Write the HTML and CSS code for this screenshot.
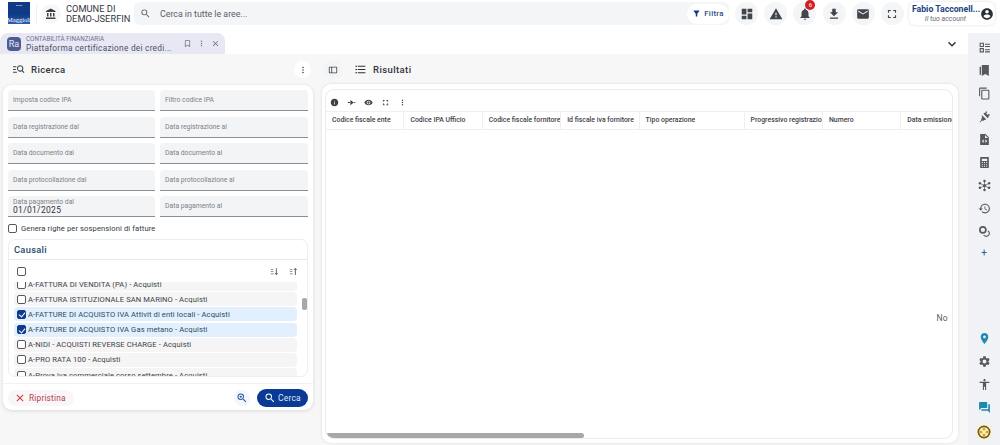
FILE: index.html
```html
<!DOCTYPE html>
<html lang="it">

<head>
    <meta charset="UTF-8">
    <title>Piattaforma certificazione dei crediti</title>
    <link rel="stylesheet" href="styles.css">
</head>

<body>
    <svg class="sprite" aria-hidden="true">
        <symbol id="i-bank" viewBox="0 0 24 24"><path d="M4 10v7h3v-7H4zm6 0v7h3v-7h-3zM2 22h19v-3H2v3zm14-12v7h3v-7h-3zm-4.500-9L2 6v2h19V6l-9.500-5z"/></symbol>
        <symbol id="i-search" viewBox="0 0 24 24"><path d="M15.500 14h-.79l-.28-.27A6.471 6.471 0 0 0 16 9.500 6.500 6.500 0 1 0 9.500 16c1.610 0 3.090-.59 4.230-1.570l.27.28v.79l5 4.990L20.490 19l-4.990-5zm-6 0C7.010 14 5 11.990 5 9.500S7.010 5 9.500 5 14 7.010 14 9.500 11.990 14 9.500 14z"/></symbol>
        <symbol id="i-filter" viewBox="0 0 24 24"><path d="M4.250 5.610C6.270 8.200 10 13 10 13v6c0 .55.45 1 1 1h2c.55 0 1-.45 1-1v-6s3.720-4.800 5.740-7.390A.998.998 0 0 0 18.950 4H5.040c-.83 0-1.300.95-.79 1.610z"/></symbol>
        <symbol id="i-dashboard" viewBox="0 0 24 24"><path d="M3 13h8V3H3v10zm0 8h8v-6H3v6zm10 0h8V11h-8v10zm0-18v6h8V3h-8z"/></symbol>
        <symbol id="i-warning" viewBox="0 0 24 24"><path d="M1 21h22L12 2 1 21zm12-3h-2v-2h2v2zm0-4h-2v-4h2v4z"/></symbol>
        <symbol id="i-bell" viewBox="0 0 24 24"><path d="M12 22c1.100 0 2-.9 2-2h-4c0 1.100.89 2 2 2zm6-6v-5c0-3.070-1.640-5.640-4.500-6.320V4c0-.83-.67-1.500-1.500-1.500s-1.500.67-1.500 1.500v.68C7.630 5.360 6 7.920 6 11v5l-2 2v1h16v-1l-2-2z"/></symbol>
        <symbol id="i-download" viewBox="0 0 24 24"><path d="M19 9h-4V3H9v6H5l7 7 7-7zM5 18v2h14v-2H5z"/></symbol>
        <symbol id="i-mail" viewBox="0 0 24 24"><path d="M20 4H4c-1.100 0-1.990.9-1.990 2L2 18c0 1.100.9 2 2 2h16c1.100 0 2-.9 2-2V6c0-1.100-.9-2-2-2zm0 4l-8 5-8-5V6l8 5 8-5v2z"/></symbol>
        <symbol id="i-full" viewBox="0 0 24 24"><path d="M7 14H5v5h5v-2H7v-3zm-2-4h2V7h3V5H5v5zm12 7h-3v2h5v-5h-2v3zM14 5v2h3v3h2V5h-5z"/></symbol>
        <symbol id="i-account" viewBox="0 0 24 24"><path d="M12 2C6.480 2 2 6.480 2 12s4.480 10 10 10 10-4.480 10-10S17.520 2 12 2zm0 3c1.660 0 3 1.340 3 3s-1.340 3-3 3-3-1.340-3-3 1.340-3 3-3zm0 14.200c-2.500 0-4.710-1.280-6-3.220.03-1.990 4-3.080 6-3.080 1.990 0 5.970 1.090 6 3.080-1.290 1.940-3.500 3.220-6 3.220z"/></symbol>
        <symbol id="i-chevron" viewBox="0 0 24 24"><path d="M16.590 8.590L12 13.170 7.410 8.590 6 10l6 6 6-6z"/></symbol>
        <symbol id="i-close" viewBox="0 0 24 24"><path d="M19 6.410L17.590 5 12 10.590 6.410 5 5 6.410 10.590 12 5 17.590 6.410 19 12 13.410 17.590 19 19 17.590 13.410 12z"/></symbol>
        <symbol id="i-more" viewBox="0 0 24 24"><path d="M12 8c1.100 0 2-.9 2-2s-.9-2-2-2-2 .9-2 2 .9 2 2 2zm0 2c-1.100 0-2 .9-2 2s.9 2 2 2 2-.9 2-2-.9-2-2-2zm0 6c-1.100 0-2 .9-2 2s.9 2 2 2 2-.9 2-2-.9-2-2-2z"/></symbol>
        <symbol id="i-bookmark-o" viewBox="0 0 24 24"><path d="M17 3H7c-1.100 0-1.990.9-1.990 2L5 21l7-3 7 3V5c0-1.100-.9-2-2-2zm0 15l-5-2.180L7 18V5h10v13z"/></symbol>
        <symbol id="i-list" viewBox="0 0 24 24"><path d="M4 10.500c-.83 0-1.500.67-1.500 1.500s.67 1.500 1.500 1.500 1.500-.67 1.500-1.500-.67-1.500-1.500-1.500zm0-6c-.83 0-1.500.67-1.500 1.500S3.170 7.500 4 7.500 5.500 6.830 5.500 6 4.830 4.500 4 4.500zm0 12c-.83 0-1.500.68-1.500 1.500s.68 1.500 1.500 1.500 1.500-.68 1.500-1.500-.67-1.500-1.500-1.500zM7 19h14v-2H7v2zm0-6h14v-2H7v2zm0-8v2h14V5H7z"/></symbol>
        <symbol id="i-place" viewBox="0 0 24 24"><path d="M12 2C8.130 2 5 5.130 5 9c0 5.250 7 13 7 13s7-7.750 7-13c0-3.870-3.130-7-7-7zm0 9.500c-1.380 0-2.500-1.120-2.500-2.500s1.120-2.500 2.500-2.500 2.500 1.120 2.500 2.500-1.120 2.500-2.500 2.500z"/></symbol>
        <symbol id="i-settings" viewBox="0 0 24 24"><path d="M19.140 12.940c.04-.3.06-.61.06-.94 0-.32-.02-.64-.07-.94l2.030-1.580c.18-.14.23-.41.12-.61l-1.920-3.320c-.12-.22-.37-.29-.59-.22l-2.390.96c-.5-.38-1.030-.7-1.620-.94l-.36-2.540c-.04-.24-.24-.41-.48-.41h-3.840c-.24 0-.43.17-.47.41l-.36 2.540c-.59.24-1.130.57-1.620.94l-2.390-.96c-.22-.08-.47 0-.59.22L2.740 8.870c-.12.21-.08.47.12.61l2.030 1.580c-.05.3-.09.63-.09.94s.02.64.07.94l-2.030 1.580c-.18.14-.23.41-.12.61l1.920 3.320c.12.22.37.29.59.22l2.390-.96c.5.38 1.030.7 1.620.94l.36 2.540c.05.24.24.41.48.41h3.840c.24 0 .44-.17.47-.41l.36-2.540c.59-.24 1.130-.56 1.620-.94l2.390.96c.22.08.47 0 .59-.22l1.920-3.320c.12-.22.07-.47-.12-.61l-2.010-1.580zM12 15.600c-1.980 0-3.600-1.620-3.600-3.600s1.620-3.600 3.600-3.600 3.600 1.620 3.600 3.600-1.620 3.600-3.600 3.600z"/></symbol>
        <symbol id="i-access" viewBox="0 0 24 24"><path d="M12 2c1.100 0 2 .9 2 2s-.9 2-2 2-2-.9-2-2 .9-2 2-2zm9 7h-6v13h-2v-6h-2v6H9V9H3V7h18v2z"/></symbol>
        <symbol id="i-forum" viewBox="0 0 24 24"><path d="M21 6h-2v9H6v2c0 .55.45 1 1 1h11l4 4V7c0-.55-.45-1-1-1zm-4 6V3c0-.55-.45-1-1-1H3c-.55 0-1 .45-1 1v14l4-4h10c.55 0 1-.45 1-1z"/></symbol>
        <symbol id="i-history" viewBox="0 0 24 24"><path d="M13 3c-4.970 0-9 4.030-9 9H1l3.890 3.890.07.14L9 12H6c0-3.870 3.130-7 7-7s7 3.130 7 7-3.130 7-7 7c-1.930 0-3.680-.79-4.940-2.060l-1.420 1.420C8.270 19.990 10.510 21 13 21c4.970 0 9-4.030 9-9s-4.030-9-9-9zm-1 5v5l4.280 2.540.72-1.210-3.500-2.080V8H12z"/></symbol>
        <symbol id="i-copy" viewBox="0 0 24 24"><path d="M16 1H4c-1.100 0-2 .9-2 2v14h2V3h12V1zm3 4H8c-1.100 0-2 .9-2 2v14c0 1.100.9 2 2 2h11c1.100 0 2-.9 2-2V7c0-1.100-.9-2-2-2zm0 16H8V7h11v14z"/></symbol>
        <symbol id="i-eye" viewBox="0 0 24 24"><path d="M12 4.500C7 4.500 2.730 7.610 1 12c1.730 4.390 6 7.500 11 7.500s9.270-3.110 11-7.500c-1.730-4.390-6-7.500-11-7.500zM12 17c-2.760 0-5-2.240-5-5s2.240-5 5-5 5 2.240 5 5-2.240 5-5 5zm0-8c-1.660 0-3 1.340-3 3s1.340 3 3 3 3-1.340 3-3-1.340-3-3-3z"/></symbol>
        <symbol id="i-info" viewBox="0 0 24 24"><path d="M12 2C6.480 2 2 6.480 2 12s4.480 10 10 10 10-4.480 10-10S17.520 2 12 2zm1 15h-2v-6h2v6zm0-8h-2V7h2v2z"/></symbol>
        <symbol id="i-checklist" viewBox="0 0 24 24"><path fill-rule="evenodd" d="M3 3h8v8H3V3zm2 2v4h4V5H5zM3 13h8v8H3v-8zm2 2v4h4v-4H5z"/><path d="M13 5h9v2h-9zM13 9h9v2h-9zM13 15h9v2h-9zM13 19h9v2h-9z"/></symbol>
        <symbol id="i-books" viewBox="0 0 24 24"><path d="M7 2h13v20l-6.500-3.500L7 22V2z"/><path d="M3 5h2.500v15H3z"/></symbol>
        <symbol id="i-plug" viewBox="0 0 24 24"><path d="M15 2l2 2-2 2 3 3 2-2 2 2-3 3 1 1-2 2-8-8 2-2 1 1zM7 9l8 8-2 2-1-1-2 2-3 0-3 3-1-1 3-3 0-3 2-2-1-1z"/></symbol>
        <symbol id="i-filecode" viewBox="0 0 24 24"><path fill-rule="evenodd" d="M6 2h8l6 6v14H4V2h2zm7 1.500V9h5.500L13 3.500zM10 12l-3 3 3 3 1.200-1.200L9.400 15l1.800-1.800L10 12zm4 0l-1.200 1.200 1.800 1.800-1.800 1.800L14 18l3-3-3-3z"/></symbol>
        <symbol id="i-calc" viewBox="0 0 24 24"><path fill-rule="evenodd" d="M5 2h14a1 1 0 0 1 1 1v18a1 1 0 0 1-1 1H5a1 1 0 0 1-1-1V3a1 1 0 0 1 1-1zm2 3v4h10V5H7zm0 6v2h2v-2H7zm4 0v2h2v-2h-2zm4 0v2h2v-2h-2zM7 15v2h2v-2H7zm4 0v2h2v-2h-2zm4 0v2h2v-2h-2zM7 18.500v1.500h2v-1.500H7zm4 0v1.500h2v-1.500h-2zm4 0v1.500h2v-1.500h-2z"/></symbol>
        <symbol id="i-hub" viewBox="0 0 24 24"><circle cx="12" cy="12" r="3"/><circle cx="12" cy="3.500" r="2.300"/><circle cx="12" cy="20.500" r="2.300"/><circle cx="3.500" cy="8" r="2.300"/><circle cx="20.500" cy="8" r="2.300"/><circle cx="3.500" cy="16" r="2.300"/><circle cx="20.500" cy="16" r="2.300"/><path d="M11.400 4h1.200v16h-1.200zM3.500 7.400l17 8.600-.6 1-17-8.600zM20.500 7.400l.6 1-17 8.600-.6-1z"/></symbol>
        <symbol id="i-coins" viewBox="0 0 24 24"><path fill-rule="evenodd" d="M9 2a7 7 0 1 1 0 14A7 7 0 0 1 9 2zm0 3a4 4 0 1 0 0 8 4 4 0 0 0 0-8z"/><path d="M18 9.500c2.500 1 4 3.300 4 5.800 0 3.700-3 6.700-6.700 6.700-2.500 0-4.700-1.400-5.800-3.500l2-.6c.8 1.300 2.200 2.100 3.800 2.100 2.600 0 4.700-2.100 4.700-4.700 0-1.500-.8-2.900-2-3.800z"/></symbol>
        <symbol id="i-sort-down" viewBox="0 0 24 24"><path d="M2 5h7v2.500H2zM2 11h7v2.500H2zM2 17h8v2.500H2zM15.500 3h3v13h3.500l-5 6-5-6h3.500z"/></symbol>
        <symbol id="i-sort-up" viewBox="0 0 24 24"><path d="M2 5h7v2.500H2zM2 11h7v2.500H2zM2 17h8v2.500H2zM15.500 21h3V8h3.500l-5-6-5 6h3.500z"/></symbol>
        <symbol id="i-searchlist" viewBox="0 0 24 24"><path d="M2 6h6v2H2zM2 11h5v2H2zM2 16h7v2H2z"/><path fill-rule="evenodd" d="M15 4a6 6 0 0 1 4.700 9.700l3.300 3.300-1.500 1.500-3.300-3.300A6 6 0 1 1 15 4zm0 2a4 4 0 1 0 0 8 4 4 0 0 0 0-8z"/></symbol>
        <symbol id="i-panel" viewBox="0 0 24 24"><path fill-rule="evenodd" d="M4 4h16a2 2 0 0 1 2 2v12a2 2 0 0 1-2 2H4a2 2 0 0 1-2-2V6a2 2 0 0 1 2-2zm0 2v12h4V6H4zm6 0v12h10V6H10z"/></symbol>
        <symbol id="i-zoomin" viewBox="0 0 24 24"><path d="M15.500 14h-.79l-.28-.27A6.471 6.471 0 0 0 16 9.500 6.500 6.500 0 1 0 9.500 16c1.610 0 3.090-.59 4.230-1.570l.27.28v.79l5 4.990L20.490 19l-4.990-5zm-6 0C7.010 14 5 11.990 5 9.500S7.010 5 9.500 5 14 7.010 14 9.500 11.990 14 9.500 14z"/><circle cx="9.500" cy="9.500" r="2.200"/></symbol>
        <symbol id="i-fold" viewBox="0 0 24 24"><path d="M2 10.500h6v3H2zM9 5l9 7-9 7zM19 10.500h3v3h-3z"/></symbol>
    </svg>

    <header class="topbar">
        <div class="logo"><span class="logo-dots">•••••</span><span class="logo-name">Maggioli</span></div>
        <span class="divider"></span>
        <span class="round-btn bank"><svg class="ico"><use href="#i-bank"/></svg></span>
        <div class="org">COMUNE DI<br>DEMO-JSERFIN</div>
        <div class="searchbar">
            <svg class="ico search-ico"><use href="#i-search"/></svg>
            <span class="search-text">Cerca in tutte le aree...</span>
            <span class="filter-btn"><svg class="ico"><use href="#i-filter"/></svg>Filtra</span>
        </div>
        <div class="actions">
            <span class="round-btn"><svg class="ico"><use href="#i-dashboard"/></svg></span>
            <span class="round-btn"><svg class="ico"><use href="#i-warning"/></svg></span>
            <span class="round-btn bell"><svg class="ico"><use href="#i-bell"/></svg><span class="badge">6</span></span>
            <span class="round-btn"><svg class="ico"><use href="#i-download"/></svg></span>
            <span class="round-btn"><svg class="ico"><use href="#i-mail"/></svg></span>
            <span class="round-btn"><svg class="ico"><use href="#i-full"/></svg></span>
        </div>
        <div class="account">
            <div class="account-text">
                <div class="account-name">Fabio Tacconell...</div>
                <div class="account-sub">Il tuo account</div>
            </div>
            <svg class="ico"><use href="#i-account"/></svg>
        </div>
    </header>

    <div class="tabstrip">
        <div class="tab">
            <span class="tab-badge">Ra</span>
            <div class="tab-text">
                <div class="tab-sup">CONTABILITÀ FINANZIARIA</div>
                <div class="tab-title">Piattaforma certificazione dei credi...</div>
            </div>
            <svg class="ico"><use href="#i-bookmark-o"/></svg>
            <svg class="ico"><use href="#i-more"/></svg>
            <svg class="ico"><use href="#i-close"/></svg>
        </div>
        <svg class="ico tab-chevron"><use href="#i-chevron"/></svg>
    </div>

    <div class="workspace">
        <main class="content">
            <section class="left">
                <div class="pane-head">
                    <svg class="ico"><use href="#i-searchlist"/></svg>
                    <h2>Ricerca</h2>
                    <span class="round-btn small"><svg class="ico"><use href="#i-more"/></svg></span>
                </div>
                <div class="search-card">
                    <div class="fields">
                        <div class="field">Imposta codice IPA</div>
                        <div class="field">Filtro codice IPA</div>
                        <div class="field">Data registrazione dal</div>
                        <div class="field">Data registrazione al</div>
                        <div class="field">Data documento dal</div>
                        <div class="field">Data documento al</div>
                        <div class="field">Data protocollazione dal</div>
                        <div class="field">Data protocollazione al</div>
                        <div class="field filled"><span>Data pagamento dal</span><b>01/01/2025</b></div>
                        <div class="field">Data pagamento al</div>
                    </div>
                    <label class="gen-row"><span class="check"></span>Genera righe per sospensioni di fatture</label>
                    <div class="causali">
                        <div class="causali-head">Causali</div>
                        <div class="causali-tools">
                            <span class="check"></span>
                            <svg class="ico"><use href="#i-sort-down"/></svg>
                            <svg class="ico"><use href="#i-sort-up"/></svg>
                        </div>
                        <div class="causali-list">
                            <div class="rows">
                                <div class="row"><span class="check"></span>A-FATTURA DI VENDITA (PA) - Acquisti</div>
                                <div class="row"><span class="check"></span>A-FATTURA ISTITUZIONALE SAN MARINO - Acquisti</div>
                                <div class="row on"><span class="check on"></span>A-FATTURE DI ACQUISTO IVA Attivit di enti locali - Acquisti</div>
                                <div class="row on"><span class="check on"></span>A-FATTURE DI ACQUISTO IVA Gas metano - Acquisti</div>
                                <div class="row"><span class="check"></span>A-NIDI - ACQUISTI REVERSE CHARGE - Acquisti</div>
                                <div class="row"><span class="check"></span>A-PRO RATA 100 - Acquisti</div>
                                <div class="row"><span class="check"></span>A-Prova iva commerciale corso settembre - Acquisti</div>
                            </div>
                            <span class="list-thumb"></span>
                        </div>
                    </div>
                    <div class="search-foot">
                        <span class="reset"><svg class="ico"><use href="#i-close"/></svg>Ripristina</span>
                        <span class="round-btn zoom"><svg class="ico"><use href="#i-zoomin"/></svg></span>
                        <span class="go"><svg class="ico"><use href="#i-search"/></svg>Cerca</span>
                    </div>
                </div>
            </section>

            <section class="right">
                <div class="pane-head results-head">
                    <span class="round-btn small"><svg class="ico"><use href="#i-panel"/></svg></span>
                    <svg class="ico list-ico"><use href="#i-list"/></svg>
                    <h2>Risultati</h2>
                </div>
                <div class="results-card">
                    <div class="grid-card">
                        <div class="grid-tools">
                            <svg class="ico"><use href="#i-info"/></svg>
                            <svg class="ico"><use href="#i-fold"/></svg>
                            <svg class="ico"><use href="#i-eye"/></svg>
                            <svg class="ico"><use href="#i-full"/></svg>
                            <svg class="ico"><use href="#i-more"/></svg>
                        </div>
                        <div class="grid-head">
                            <div class="col">Codice fiscale ente</div>
                            <div class="col">Codice IPA Ufficio</div>
                            <div class="col">Codice fiscale fornitore</div>
                            <div class="col">Id fiscale iva fornitore</div>
                            <div class="col">Tipo operazione</div>
                            <div class="col">Progressivo registrazione</div>
                            <div class="col">Numero</div>
                            <div class="col">Data emissione</div>
                        </div>
                        <div class="grid-body"><span class="no-data">No</span></div>
                        <div class="grid-scroll"><span class="grid-thumb"></span></div>
                    </div>
                </div>
            </section>
        </main>

        <aside class="rail">
            <svg class="ico"><use href="#i-checklist"/></svg>
            <svg class="ico"><use href="#i-books"/></svg>
            <svg class="ico"><use href="#i-copy"/></svg>
            <svg class="ico"><use href="#i-plug"/></svg>
            <svg class="ico"><use href="#i-filecode"/></svg>
            <svg class="ico"><use href="#i-calc"/></svg>
            <svg class="ico"><use href="#i-hub"/></svg>
            <svg class="ico"><use href="#i-history"/></svg>
            <svg class="ico"><use href="#i-coins"/></svg>
            <span class="rail-plus">+</span>
            <span class="rail-gap"></span>
            <svg class="ico teal"><use href="#i-place"/></svg>
            <svg class="ico"><use href="#i-settings"/></svg>
            <svg class="ico"><use href="#i-access"/></svg>
            <svg class="ico teal"><use href="#i-forum"/></svg>
            <span class="rail-help"><svg viewBox="0 0 24 24"><circle cx="12" cy="12" r="8.500" fill="none" stroke="#6d5a20" stroke-width="2.500"/><circle cx="12" cy="7.500" r="2.300" fill="#d9a520"/><circle cx="12" cy="16.500" r="2.300" fill="#d9a520"/><circle cx="7.500" cy="12" r="2.300" fill="#d9a520"/><circle cx="16.500" cy="12" r="2.300" fill="#d9a520"/></svg></span>
        </aside>
    </div>
</body>

</html>
```

FILE: styles.css
```css
* {
    box-sizing: border-box;
}

html,
body {
    height: 100%;
}

body {
    margin: 0;
    height: 445px;
    overflow: hidden;
    font-family: Roboto, 'Liberation Sans', sans-serif;
    background: #ffffff;
    color: #3a3f47;
    display: flex;
    flex-direction: column;
}

.sprite {
    display: none;
}

.ico {
    width: 16px;
    height: 16px;
    fill: currentColor;
    flex: none;
}

.round-btn {
    width: 23px;
    height: 23px;
    border-radius: 50%;
    background: #f4f5f6;
    color: #41454c;
    display: flex;
    align-items: center;
    justify-content: center;
    flex: none;
    position: relative;
}

/* top bar */
.topbar {
    height: 33px;
    flex: none;
    display: flex;
    align-items: flex-start;
    padding: 2px 5px 0 8px;
}

.logo {
    width: 22px;
    height: 22px;
    background: linear-gradient(#0f3a86 0 55%, #2a5fae 100%);
    color: #ffffff;
    display: flex;
    flex-direction: column;
    justify-content: space-between;
    align-items: center;
    overflow: hidden;
    flex: none;
}

.logo-dots {
    font-size: 4px;
    line-height: 7px;
}

.logo-name {
    font-family: 'Liberation Serif', serif;
    font-size: 6.500px;
    line-height: 8px;
}

.divider {
    width: 1px;
    height: 18px;
    margin: 3px 0 0 6px;
    background: #eeeff1;
    flex: none;
}

.bank {
    width: 20px;
    height: 20px;
    margin: 2px 0 0 4px;
    background: #f7f7f8;
    color: #3a3f47;
}

.bank .ico {
    width: 12px;
    height: 12px;
}

.org {
    margin: 2px 0 0 5px;
    width: 68px;
    flex: none;
    white-space: nowrap;
    font-size: 9.300px;
    line-height: 10px;
    color: #33373d;
}

.searchbar {
    width: 595px;
    flex: none;
    height: 23px;
    background: #f4f5f7;
    border-radius: 6px;
    display: flex;
    align-items: center;
    padding-left: 6px;
    color: #5b6067;
}

.search-ico {
    width: 11px;
    height: 11px;
}

.search-text {
    margin-left: 9px;
    font-size: 8.800px;
    flex: 1;
}

.filter-btn {
    height: 20px;
    width: 42px;
    border-radius: 10px;
    background: #ffffff;
    display: flex;
    align-items: center;
    justify-content: center;
    gap: 3px;
    font-size: 7.800px;
    font-weight: 500;
    letter-spacing: 0.3px;
    color: #2c4a86;
}

.filter-btn .ico {
    width: 9px;
    height: 9px;
    color: #0d3a8c;
}

.actions {
    margin-left: 6px;
    display: flex;
    gap: 6.200px;
    flex: none;
}

.actions .ico {
    width: 14px;
    height: 14px;
}

.badge {
    position: absolute;
    top: -2px;
    right: 1px;
    width: 10px;
    height: 10px;
    border-radius: 50%;
    background: #d32027;
    color: #ffffff;
    font-size: 6px;
    line-height: 10px;
    text-align: center;
}

.account {
    margin-left: 5px;
    width: 86px;
    height: 23px;
    flex: none;
    border-radius: 6px;
    background: #ffffff;
    box-shadow: 0 0 3px rgba(0, 0, 0, 0.15);
    display: flex;
    align-items: center;
    padding: 0 3px;
}

.account-text {
    width: 67px;
    text-align: center;
}

.account-name {
    font-size: 8.700px;
    line-height: 11px;
    font-weight: 700;
    color: #1c4382;
    white-space: nowrap;
}

.account-sub {
    font-size: 7px;
    line-height: 9px;
    font-style: italic;
    color: #666b72;
}

.account .ico {
    width: 14px;
    height: 14px;
    margin-left: 1px;
    color: #2b2e33;
}

/* tab strip */
.tabstrip {
    height: 21px;
    flex: none;
    display: flex;
    align-items: center;
    padding-right: 40px;
}

.tab {
    width: 225px;
    height: 21px;
    background: #e8e8f4;
    border-radius: 8px 8px 0 0;
    display: flex;
    align-items: center;
    padding: 1px 0 0 7px;
    color: #6e7280;
}

.tab-badge {
    width: 14px;
    height: 14px;
    border-radius: 4px;
    background: #4f5b93;
    color: #e8e8f4;
    font-size: 9px;
    line-height: 14px;
    text-align: center;
    flex: none;
}

.tab-text {
    width: 152px;
    margin-left: 5px;
}

.tab-sup {
    font-size: 6.300px;
    line-height: 7px;
    color: #6f7390;
}

.tab-title {
    font-size: 8.300px;
    line-height: 10px;
    letter-spacing: 0.25px;
    color: #4b5068;
    white-space: nowrap;
}

.tab .ico {
    width: 9px;
    height: 9px;
    margin-left: 5px;
    margin-top: -2px;
}

.tab-chevron {
    margin-left: auto;
    color: #2e3238;
}

/* main */
.workspace {
    flex: 1;
    min-height: 0;
    display: flex;
    background: #f7f7f8;
}

.content {
    flex: 1;
    min-width: 0;
    display: flex;
    padding: 0 10px 0 3px;
    gap: 10px;
}

.left {
    width: 310px;
    flex: none;
}

.right {
    flex: 1;
    min-width: 0;
    display: flex;
    flex-direction: column;
}

.pane-head {
    height: 31px;
    display: flex;
    align-items: center;
    padding: 0 2px 0 9px;
    flex: none;
}

.pane-head h2 {
    margin: 0 0 0 6px;
    flex: 1;
    font-size: 9.500px;
    font-weight: 500;
    letter-spacing: 0.4px;
    color: #31353b;
}

.pane-head .ico {
    width: 13px;
    height: 13px;
}

.pane-head .small {
    width: 17px;
    height: 17px;
    background: #ffffff;
}

.pane-head .small .ico {
    width: 10px;
    height: 10px;
}

.search-card {
    background: #ffffff;
    border-radius: 9px;
    box-shadow: 0 1px 4px rgba(0, 0, 0, 0.12);
    padding: 5px 5px 0;
    height: 325px;
}

.fields {
    display: grid;
    grid-template-columns: 147px 148px;
    column-gap: 5px;
    row-gap: 5.500px;
}

.field {
    height: 21px;
    background: #f3f4f5;
    border-radius: 4px 4px 0 0;
    border-bottom: 1px solid #8b8f94;
    padding: 0 5px;
    display: flex;
    align-items: center;
    font-size: 6.800px;
    color: #7d8187;
}

.field.filled {
    flex-direction: column;
    align-items: flex-start;
    justify-content: center;
    line-height: 8px;
}

.field b {
    font-weight: 400;
    font-size: 8.500px;
    line-height: 9px;
    letter-spacing: 0.3px;
    color: #2f3338;
}

.check {
    width: 9px;
    height: 9px;
    border: 1px solid #55595f;
    border-radius: 2px;
    background: #ffffff;
    flex: none;
    display: block;
    position: relative;
}

.check.on {
    background: #0e3a8f;
    border-color: #0e3a8f;
}

.check.on::after {
    content: "";
    position: absolute;
    left: 1.500px;
    top: 0.500px;
    width: 3px;
    height: 5px;
    border: solid #ffffff;
    border-width: 0 1px 1px 0;
    transform: rotate(40deg);
}

.gen-row {
    margin-top: 6px;
    height: 11px;
    display: flex;
    align-items: center;
    gap: 4px;
    font-size: 7.600px;
    letter-spacing: 0.1px;
    color: #35393f;
}

.causali {
    margin-top: 5px;
    height: 138px;
    border: 1px solid #eceef0;
    border-radius: 7px;
    overflow: hidden;
}

.causali-head {
    height: 20px;
    border-bottom: 1px solid #e6e8ea;
    padding-left: 5px;
    font-size: 9.300px;
    font-weight: 500;
    line-height: 20px;
    letter-spacing: 0.3px;
    color: #1f4a68;
}

.causali-tools {
    height: 22px;
    display: flex;
    align-items: center;
    padding: 0 9px 0 8px;
    color: #6f7379;
}

.causali-tools .ico {
    width: 9px;
    height: 9px;
    margin-left: 10px;
}

.causali-tools .ico:first-of-type {
    margin-left: auto;
}

.causali-list {
    height: 94px;
    overflow: hidden;
    position: relative;
    padding: 0 10px 0 5px;
}

.rows {
    display: flex;
    flex-direction: column;
    gap: 1.200px;
    margin-top: -5px;
}

.row {
    height: 14px;
    flex: none;
    background: #f5f5f6;
    border-radius: 4px;
    display: flex;
    align-items: center;
    gap: 2px;
    padding-left: 3px;
    font-size: 7.600px;
    letter-spacing: 0.1px;
    color: #3f4349;
}

.row.on {
    background: #e1f0fc;
    color: #2e4a63;
}

.list-thumb {
    position: absolute;
    top: 16px;
    right: 0;
    width: 5px;
    height: 12px;
    border-radius: 2px;
    background: #a6a8ab;
}

.search-foot {
    margin: 6px -5px 0;
    padding: 0 5px;
    border-top: 1px solid #f0f1f2;
    height: 29px;
    display: flex;
    align-items: center;
}

.reset {
    height: 16px;
    padding: 0 8px 0 6px;
    border-radius: 8px;
    background: #f8f6f6;
    color: #b5404f;
    font-size: 8.300px;
    letter-spacing: 0.2px;
    display: flex;
    align-items: center;
    gap: 3px;
}

.reset .ico {
    width: 12px;
    height: 12px;
    color: #c9353f;
}

.zoom {
    margin-left: auto;
    width: 16px;
    height: 16px;
    background: #f3f6fa;
    color: #2b5aa0;
}

.zoom .ico {
    width: 12px;
    height: 12px;
}

.go {
    margin-left: 7px;
    width: 51px;
    height: 18px;
    border-radius: 9px;
    background: #0a3a94;
    color: #dfe6f3;
    font-size: 8.500px;
    letter-spacing: 0.2px;
    display: flex;
    align-items: center;
    justify-content: center;
    gap: 2px;
}

.go .ico {
    width: 12px;
    height: 12px;
    color: #ffffff;
}

/* results */
.results-head {
    padding-left: 0;
}

.results-head .small {
    background: #f3f4f6;
    width: 20px;
    height: 20px;
}

.results-head .list-ico {
    margin-left: 11px;
    color: #2b2f35;
}

.results-card {
    flex: 1;
    min-height: 0;
    margin: -1px 0 2px -1px;
    background: #ffffff;
    border-radius: 9px;
    box-shadow: 0 0 3px rgba(0, 0, 0, 0.12);
    padding: 5px 5px 0 3px;
}

.grid-card {
    height: 350px;
    background: #ffffff;
    border: 1px solid #eaebed;
    border-radius: 9px;
    display: flex;
    flex-direction: column;
    overflow: hidden;
}

.grid-tools {
    height: 21px;
    padding: 3px 0 0 4px;
    display: flex;
    align-items: center;
    gap: 8px;
    color: #3d4046;
    flex: none;
}

.grid-tools .ico {
    width: 9px;
    height: 9px;
}

.grid-head {
    height: 19px;
    display: flex;
    border-top: 1px solid #eeeff0;
    border-bottom: 1px solid #eeeff0;
    flex: none;
}

.col {
    width: 78.400px;
    flex: none;
    border-right: 1px solid #eeeff0;
    padding-left: 6px;
    font-size: 6.900px;
    font-weight: 500;
    line-height: 17px;
    color: #3f4248;
    white-space: nowrap;
    overflow: hidden;
}

.col:nth-child(5) {
    width: 105px;
}

.col:last-child {
    border-right: 0;
}

.grid-body {
    flex: 1;
    position: relative;
}

.no-data {
    position: absolute;
    right: 4px;
    top: 183px;
    font-size: 8.500px;
    letter-spacing: 0.3px;
    color: #55595f;
}

.grid-scroll {
    height: 5px;
    flex: none;
}

.grid-thumb {
    display: block;
    width: 258px;
    height: 5px;
    border-radius: 3px;
    background: #a7a8aa;
}

/* right rail */
.rail {
    width: 32px;
    flex: none;
    background: #f1f2f6;
    display: flex;
    flex-direction: column;
    align-items: center;
    color: #54585f;
    margin-top: -21px;
    padding-top: 7.500px;
    gap: 10px;
}

.rail .ico {
    width: 13px;
    height: 13px;
}

.rail .teal {
    color: #1d8ab0;
}

.rail-plus {
    font-size: 10px;
    line-height: 10px;
    color: #2c5aa0;
}

.rail-gap {
    flex: 1;
}

.rail-help {
    width: 16px;
    height: 16px;
    margin-bottom: 5px;
    border-radius: 50%;
    background: #fdf3cf;
    display: block;
}

.rail-help svg {
    display: block;
    width: 16px;
    height: 16px;
}
```
